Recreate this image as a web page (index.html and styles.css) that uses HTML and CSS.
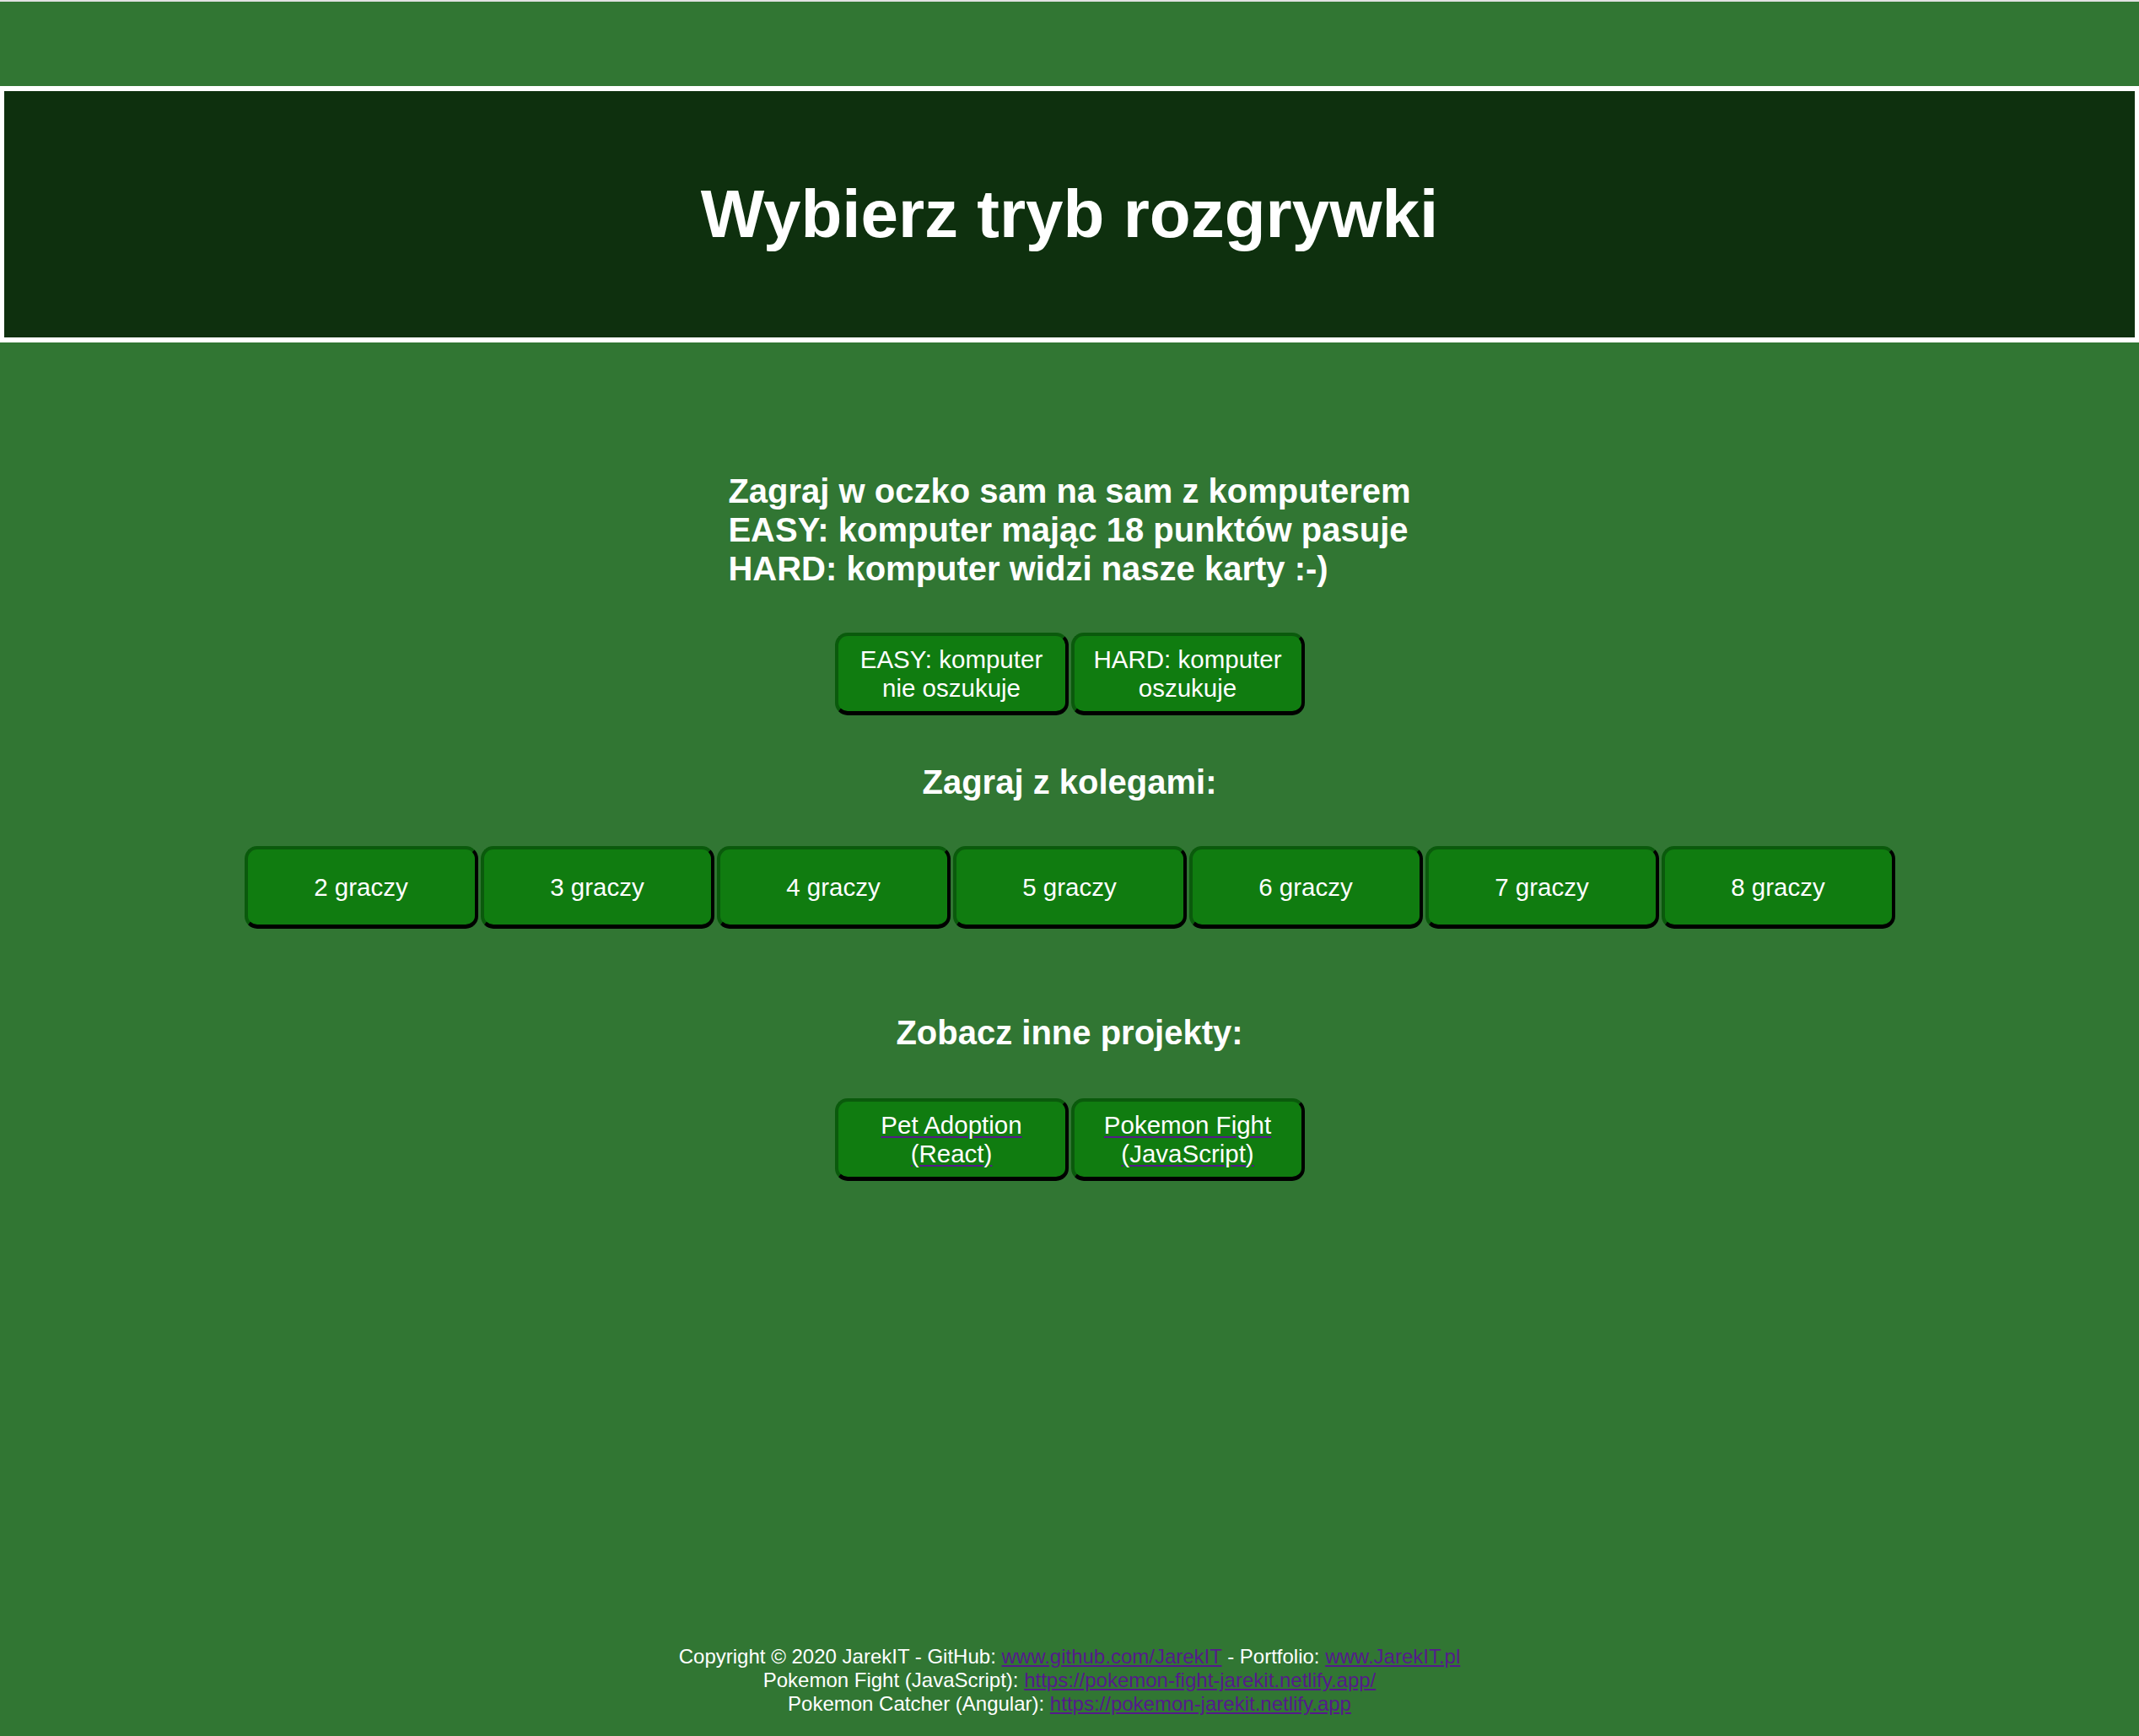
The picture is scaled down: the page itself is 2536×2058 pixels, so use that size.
FILE: index.html
```html
<!DOCTYPE html>
<html lang="pl">
<head>
<meta charset="utf-8">
<title>Oczko - wybierz tryb</title>
<link rel="stylesheet" href="styles.css">
</head>
<body>
<div class="page">
  <header class="banner">
    <h1 class="banner-title">Wybierz tryb rozgrywki</h1>
  </header>

  <main class="content">
    <p class="intro">Zagraj w oczko sam na sam z komputerem<br>EASY: komputer mając 18 punktów pasuje<br>HARD: komputer widzi nasze karty :-)</p>

    <div class="btn-row btn-row-modes">
      <button class="btn">EASY: komputer nie oszukuje</button>
      <button class="btn">HARD: komputer oszukuje</button>
    </div>

    <h2 class="section-title section-friends">Zagraj z kolegami:</h2>

    <div class="btn-row btn-row-players">
      <button class="btn">2 graczy</button>
      <button class="btn">3 graczy</button>
      <button class="btn">4 graczy</button>
      <button class="btn">5 graczy</button>
      <button class="btn">6 graczy</button>
      <button class="btn">7 graczy</button>
      <button class="btn">8 graczy</button>
    </div>

    <h2 class="section-title section-projects">Zobacz inne projekty:</h2>

    <div class="btn-row btn-row-projects">
      <button class="btn"><span class="btn-link">Pet Adoption (React)</span></button>
      <button class="btn"><span class="btn-link">Pokemon Fight (JavaScript)</span></button>
    </div>
  </main>

  <footer class="footer">
    <div>Copyright © 2020 JarekIT - GitHub: <a class="footer-link" href="#">www.github.com/JarekIT</a> - Portfolio: <a class="footer-link" href="#">www.JarekIT.pl</a></div>
    <div>Pokemon Fight (JavaScript): <a class="footer-link" href="#">https://pokemon-fight-jarekit.netlify.app/</a></div>
    <div>Pokemon Catcher (Angular): <a class="footer-link" href="#">https://pokemon-jarekit.netlify.app</a></div>
  </footer>
</div>
</body>
</html>
```
FILE: styles.css
```css
html, body {
  margin: 0;
  padding: 0;
}

body {
  background: #317633;
  font-family: "Liberation Sans", Arial, Helvetica, sans-serif;
  color: #ffffff;
  overflow: hidden;
}

.page {
  box-sizing: border-box;
  min-height: 100vh;
  display: flex;
  flex-direction: column;
  border-top: 2px solid #e2e2e2;
}

.banner {
  margin-top: 100px;
  background: #0e300e;
  border-style: solid;
  border-color: #ffffff;
  border-width: 6px 5px;
}

.banner-title {
  margin: 0;
  padding: 100px 0;
  text-align: center;
  font-size: 80px;
  font-weight: bold;
  line-height: 92px;
}

.content {
  display: flex;
  flex-direction: column;
  align-items: center;
}

.intro {
  margin: 153px 0 0;
  font-size: 40px;
  font-weight: bold;
  line-height: 46px;
  text-align: left;
}

.btn-row {
  display: flex;
  justify-content: center;
  gap: 3px;
}

.btn-row-modes {
  margin-top: 53px;
}

.btn-row-players {
  margin-top: 53px;
}

.btn-row-projects {
  margin-top: 55px;
}

.btn {
  box-sizing: border-box;
  width: 277px;
  height: 98px;
  padding: 0 14px;
  display: flex;
  align-items: center;
  justify-content: center;
  text-align: center;
  background: #107c10;
  color: #ffffff;
  font-family: "Liberation Sans", Arial, Helvetica, sans-serif;
  font-size: 29.5px;
  line-height: 34px;
  border-style: solid;
  border-width: 4px 4px 5px 4px;
  border-color: #0a5a0c #000000 #000000 #0a5a0c;
  border-radius: 15px;
}

.btn-link {
  text-decoration: underline;
  text-decoration-color: #551a8b;
  text-decoration-thickness: 2px;
  text-underline-offset: 3px;
}

.section-title {
  margin: 0;
  font-size: 40px;
  font-weight: bold;
  line-height: 46px;
  text-align: center;
}

.section-friends {
  margin-top: 56px;
}

.section-projects {
  margin-top: 100px;
}

.footer {
  margin-top: auto;
  padding-bottom: 24px;
  text-align: center;
  font-size: 24px;
  line-height: 28px;
}

.footer-link {
  color: #551a8b;
  text-decoration: underline;
}
```
